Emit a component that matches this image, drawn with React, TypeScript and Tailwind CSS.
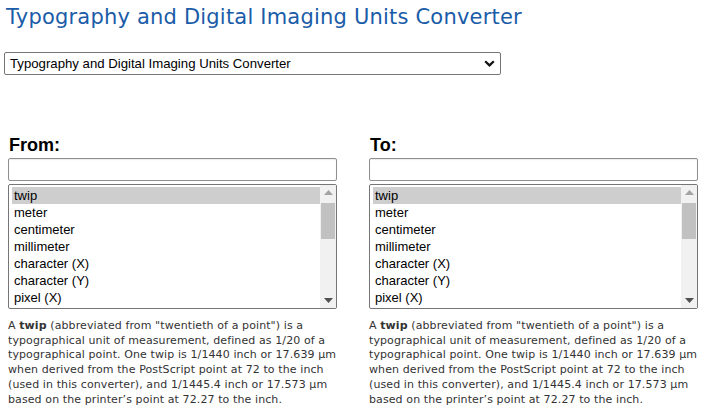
const units = [
  "twip",
  "meter",
  "centimeter",
  "millimeter",
  "character (X)",
  "character (Y)",
  "pixel (X)",
  "pixel (Y)",
];

function UnitColumn({ label }: { label: string }) {
  return (
    <div className="w-[329px]">
      <div className="font-['Liberation_Sans',Arial,sans-serif] text-[18px] font-bold leading-[20px] text-black pl-[1px]">
        {label}
      </div>
      <div className="mt-[3px] h-[23px] w-full rounded-[2px] border border-[#8f8f8f] bg-white shadow-[inset_0_1px_1px_rgba(0,0,0,0.08)]" />
      <div className="mt-[3px] flex h-[125px] w-full overflow-hidden rounded-[2px] border border-[#767676] bg-white">
        <ul className="flex-1 pl-[3px] pt-[2px] font-['Liberation_Sans',Arial,sans-serif] text-[13px] leading-[17px] text-black">
          {units.map((u, i) => (
            <li key={u} className={i === 0 ? "bg-[#cecece] pl-[2px]" : "pl-[2px]"}>
              {u}
            </li>
          ))}
        </ul>
        <div className="flex w-[16px] flex-col items-center justify-between bg-[#f1f1f1] py-[5px]">
          <div className="flex flex-col items-center">
            <svg width="9" height="5" viewBox="0 0 9 5">
              <path d="M0 5 L4.5 0 L9 5 Z" fill="#a3a3a3" />
            </svg>
            <div className="mt-[8px] h-[36px] w-[14px] bg-[#c1c1c1]" />
          </div>
          <svg width="9" height="5" viewBox="0 0 9 5">
            <path d="M0 0 L4.5 5 L9 0 Z" fill="#505050" />
          </svg>
        </div>
      </div>
      <p className="mt-[10px] w-[336px] font-['DejaVu_Sans',Verdana,sans-serif] text-[11px] leading-[14.7px] text-[#333] tracking-[0.1px]">
        A <b>twip</b> (abbreviated from "twentieth of a point") is a typographical unit of
        measurement, defined as 1/20 of a typographical point. One twip is 1/1440 inch or
        17.639 µm when derived from the PostScript point at 72 to the inch (used in this
        converter), and 1/1445.4 inch or 17.573 µm based on the printer’s point at 72.27 to
        the inch.
      </p>
    </div>
  );
}

export default function App() {
  return (
    <div className="h-[405px] w-[705px] overflow-hidden bg-white">
      <h1 className="pl-[6px] pt-[4px] font-['DejaVu_Sans',Verdana,sans-serif] text-[21px] leading-[26px] tracking-[0.2px] text-[#1a5ca8]">
        Typography and Digital Imaging Units Converter
      </h1>
      <div className="ml-[4px] mt-[22px] flex h-[23px] w-[497px] items-center justify-between rounded-[2px] border border-[#767676] bg-white pl-[5px] pr-[5px]">
        <span className="font-['Liberation_Sans',Arial,sans-serif] text-[13.2px] text-black">
          Typography and Digital Imaging Units Converter
        </span>
        <svg width="11" height="7" viewBox="0 0 11 7">
          <path d="M1.2 1.2 L5.5 5.4 L9.8 1.2" fill="none" stroke="#111" strokeWidth="2.2" />
        </svg>
      </div>
      <div className="ml-[8px] mt-[60px] flex gap-[32px]">
        <UnitColumn label="From:" />
        <UnitColumn label="To:" />
      </div>
    </div>
  );
}
